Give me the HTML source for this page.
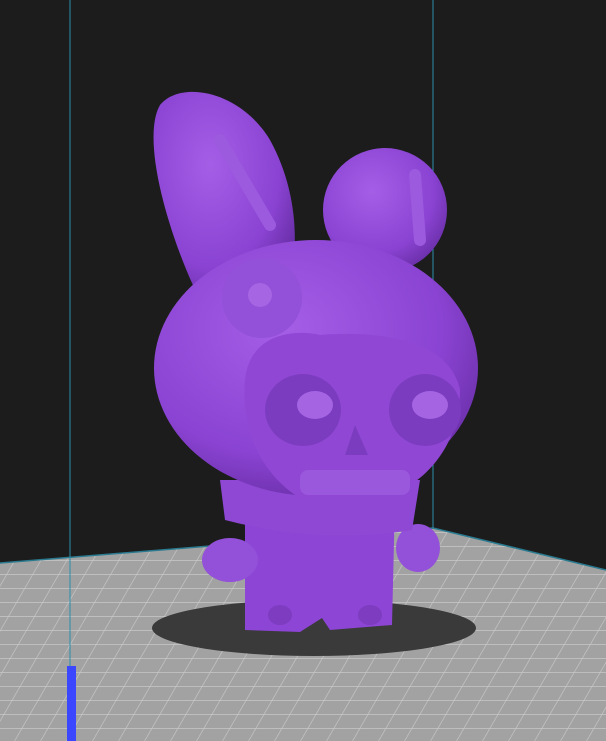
<!DOCTYPE html>
<html><head><style>html,body{margin:0;padding:0;background:#1c1c1c;width:606px;height:741px;overflow:hidden}</style></head>
<body>
<svg width="606" height="741" viewBox="0 0 606 741" xmlns="http://www.w3.org/2000/svg">
<defs>
<pattern id="g" width="26" height="14" patternUnits="userSpaceOnUse" patternTransform="skewX(-30)">
<rect width="26" height="14" fill="#a2a2a2"/>
<path d="M0 0H26M0 0V14" stroke="#c8c8c8" stroke-width="1.5"/>
</pattern>
<radialGradient id="p" cx="0.4" cy="0.35" r="0.7">
<stop offset="0" stop-color="#a45ee6"/><stop offset="0.7" stop-color="#8a43d2"/><stop offset="1" stop-color="#6a2fa8"/>
</radialGradient>
</defs>
<rect width="606" height="741" fill="#1c1c1c"/>
<polygon points="0,563 433,528 606,570 606,741 0,741" fill="url(#g)"/>
<polyline points="0,563 433,528 606,570" fill="none" stroke="#2a7a90" stroke-width="1.5"/>
<line x1="70" y1="0" x2="70" y2="666" stroke="#2a8fa8" stroke-width="1"/>
<line x1="433" y1="0" x2="433" y2="528" stroke="#2a8fa8" stroke-width="1"/>
<rect x="67" y="666" width="9" height="75" fill="#3b47ff"/>
<ellipse cx="314" cy="628" rx="162" ry="28" fill="#3a3a3a"/>
<path d="M160 105 C180 80 240 90 270 140 C295 185 300 240 290 280 L200 300 C170 240 140 140 160 105Z" fill="url(#p)"/>
<circle cx="385" cy="210" r="62" fill="url(#p)"/>
<path d="M245 500 L395 500 L392 625 L330 630 L322 618 L300 632 L245 630Z" fill="#8c45d4"/>
<ellipse cx="230" cy="560" rx="28" ry="22" fill="#9350d8"/>
<ellipse cx="418" cy="548" rx="22" ry="24" fill="#9350d8"/>
<ellipse cx="280" cy="615" rx="12" ry="10" fill="#7e3cc0"/>
<ellipse cx="370" cy="615" rx="12" ry="10" fill="#7e3cc0"/>
<path d="M220 480 L420 480 L412 530 Q320 545 225 520Z" fill="#8e48d4"/>
<ellipse cx="316" cy="368" rx="162" ry="128" fill="url(#p)"/>
<path d="M245 380 C250 330 300 330 320 335 C380 330 450 340 460 390 C460 450 420 485 390 495 L300 498 C270 480 240 440 245 380Z" fill="#9048d4"/>
<ellipse cx="303" cy="410" rx="38" ry="36" fill="#7c3cc0"/>
<ellipse cx="425" cy="410" rx="36" ry="36" fill="#7c3cc0"/>
<ellipse cx="315" cy="405" rx="18" ry="14" fill="#a565e2"/>
<ellipse cx="430" cy="405" rx="18" ry="14" fill="#a565e2"/>
<path d="M355 425 L345 455 L368 455Z" fill="#7c3cc0"/>
<rect x="300" y="470" width="110" height="25" rx="8" fill="#9a58dc"/>
<circle cx="262" cy="298" r="40" fill="#9350d8"/>
<circle cx="260" cy="295" r="12" fill="#a665e2"/>
<path d="M220 140 L270 225" stroke="#9c5ade" stroke-width="12" stroke-linecap="round"/>
<path d="M415 175 L420 240" stroke="#9c5ade" stroke-width="12" stroke-linecap="round"/>
</svg>
</body></html>
